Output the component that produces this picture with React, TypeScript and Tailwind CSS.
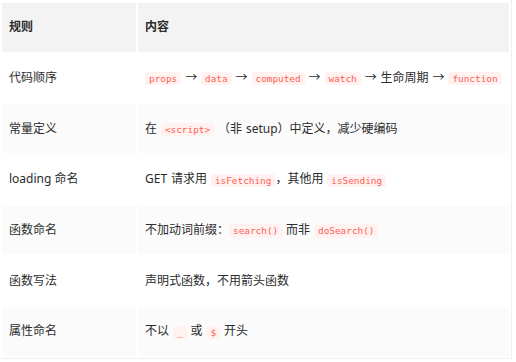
import React from "react";

const C = ({ children }: { children: React.ReactNode }) => (
  <code className="inline-block rounded-[3px] bg-[#fff2f1] px-[4px] align-middle font-['DejaVu_Sans_Mono',monospace] text-[9.4px] leading-[13.3px] text-[#ff5e52] [word-spacing:0]">
    {children}
  </code>
);

const rows: [string, React.ReactNode][] = [
  [
    "代码顺序",
    <>
      <C>props</C> → <C>data</C> → <C>computed</C> → <C>watch</C> → 生命周期 → <C>function</C>
    </>,
  ],
  [
    "常量定义",
    <>
      在 <C>{"<script>"}</C> （非 setup）中定义，减少硬编码
    </>,
  ],
  [
    "loading 命名",
    <>
      GET 请求用 <C>isFetching</C>，其他用 <C>isSending</C>
    </>,
  ],
  [
    "函数命名",
    <>
      不加动词前缀：<C>search()</C> 而非 <C>doSearch()</C>
    </>,
  ],
  ["函数写法", <>声明式函数，不用箭头函数</>],
  [
    "属性命名",
    <>
      不以 <C>_</C> 或 <C>$</C> 开头
    </>,
  ],
];

export default function App() {
  return (
    <div className="h-[362px] w-[516px] bg-white font-['Noto_Sans','Noto_Sans_CJK_SC',sans-serif] text-[12px] text-[#2b2b2b]">
      <div className="w-[512px] border-b border-r border-[#efefef] pt-[1px]">
        <table className="w-[511px] table-fixed border-separate border-spacing-[2px]">
          <colgroup>
            <col className="w-[134px]" />
            <col className="w-[371px]" />
          </colgroup>
          <thead>
            <tr className="h-[48.7px] bg-[#f3f3f3]">
              <th className="px-[7px] text-left align-middle font-bold">规则</th>
              <th className="px-[7px] text-left align-middle font-bold">内容</th>
            </tr>
          </thead>
          <tbody>
            {rows.map(([a, b], i) => (
              <tr
                key={i}
                className={`h-[48.7px] ${i % 2 === 1 ? "bg-[#fbfbfb]" : "bg-white"}`}
              >
                <td className="px-[7px] align-middle">{a}</td>
                <td className="whitespace-nowrap px-[7px] align-middle [word-spacing:0.8px]">{b}</td>
              </tr>
            ))}
          </tbody>
        </table>
      </div>
    </div>
  );
}
